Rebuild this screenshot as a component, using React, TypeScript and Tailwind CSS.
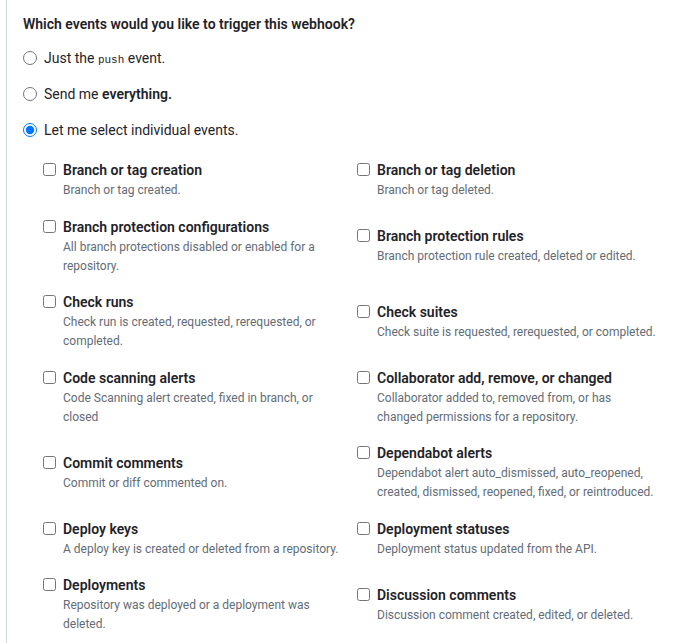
import { useState } from "react";

type Hook = {
  title: string;
  desc: string[];
};

// events shown in two columns, row by row
const events: Hook[] = [
  { title: "Branch or tag creation", desc: ["Branch or tag created."] },
  { title: "Branch or tag deletion", desc: ["Branch or tag deleted."] },
  { title: "Branch protection configurations", desc: ["All branch protections disabled or enabled for a", "repository."] },
  { title: "Branch protection rules", desc: ["Branch protection rule created, deleted or edited."] },
  { title: "Check runs", desc: ["Check run is created, requested, rerequested, or", "completed."] },
  { title: "Check suites", desc: ["Check suite is requested, rerequested, or completed."] },
  { title: "Code scanning alerts", desc: ["Code Scanning alert created, fixed in branch, or", "closed"] },
  { title: "Collaborator add, remove, or changed", desc: ["Collaborator added to, removed from, or has", "changed permissions for a repository."] },
  { title: "Commit comments", desc: ["Commit or diff commented on."] },
  { title: "Dependabot alerts", desc: ["Dependabot alert auto_dismissed, auto_reopened,", "created, dismissed, reopened, fixed, or reintroduced."] },
  { title: "Deploy keys", desc: ["A deploy key is created or deleted from a repository."] },
  { title: "Deployment statuses", desc: ["Deployment status updated from the API."] },
  { title: "Deployments", desc: ["Repository was deployed or a deployment was", "deleted."] },
  { title: "Discussion comments", desc: ["Discussion comment created, edited, or deleted."] },
];

function App() {
  const [mode, setMode] = useState<string>("select");
  const [checked, setChecked] = useState<Record<string, boolean>>({});

  const toggle = (t: string) => setChecked((prev) => ({ ...prev, [t]: !prev[t] }));

  return (
    <div className="min-h-screen bg-white pl-[6px] font-['Roboto',sans-serif] text-[#1f2328]">
      <div className="min-h-screen border-l border-[#d0d7de] pl-[16px] pt-[14px]">
        <h4 className="text-[14px] font-semibold leading-[20px]">
          Which events would you like to trigger this webhook?
        </h4>

        <div className="mt-[14px] flex flex-col gap-4">
          <label className="flex h-[20px] items-center gap-[7px] text-[14px] leading-[20px]">
            <input
              type="radio"
              name="mode"
              className="m-0 h-[14px] w-[14px]"
              checked={mode === "push"}
              onChange={() => setMode("push")}
            />
            <span>
              Just the <code className="font-['Liberation_Mono',monospace] text-[11px] leading-none">push</code> event.
            </span>
          </label>
          <label className="flex h-[20px] items-center gap-[7px] text-[14px] leading-[20px]">
            <input
              type="radio"
              name="mode"
              className="m-0 h-[14px] w-[14px]"
              checked={mode === "all"}
              onChange={() => setMode("all")}
            />
            <span>
              Send me <strong className="font-semibold">everything.</strong>
            </span>
          </label>
          <label className="flex h-[20px] items-center gap-[7px] text-[14px] leading-[20px]">
            <input
              type="radio"
              name="mode"
              className="m-0 h-[14px] w-[14px]"
              checked={mode === "select"}
              onChange={() => setMode("select")}
            />
            <span>Let me select individual events.</span>
          </label>
        </div>

        <div className="ml-[20px] mt-[20px] grid w-[628px] grid-cols-2 items-center gap-y-[16.5px]">
          {events.map((e) => (
            <label key={e.title} className="flex items-start gap-[7px]">
              <input
                type="checkbox"
                className="m-0 mt-[3px] h-[13px] w-[13px] shrink-0"
                checked={!!checked[e.title]}
                onChange={() => toggle(e.title)}
              />
              <div className="whitespace-nowrap">
                <div className="text-[14px] font-semibold leading-[20px]">{e.title}</div>
                <div className="pt-[1px]">
                  {e.desc.map((line) => (
                    <div key={line} className="text-[12px] leading-[19px] text-[#636c76]">
                      {line}
                    </div>
                  ))}
                </div>
              </div>
            </label>
          ))}
        </div>
      </div>
    </div>
  );
}

export default App;
